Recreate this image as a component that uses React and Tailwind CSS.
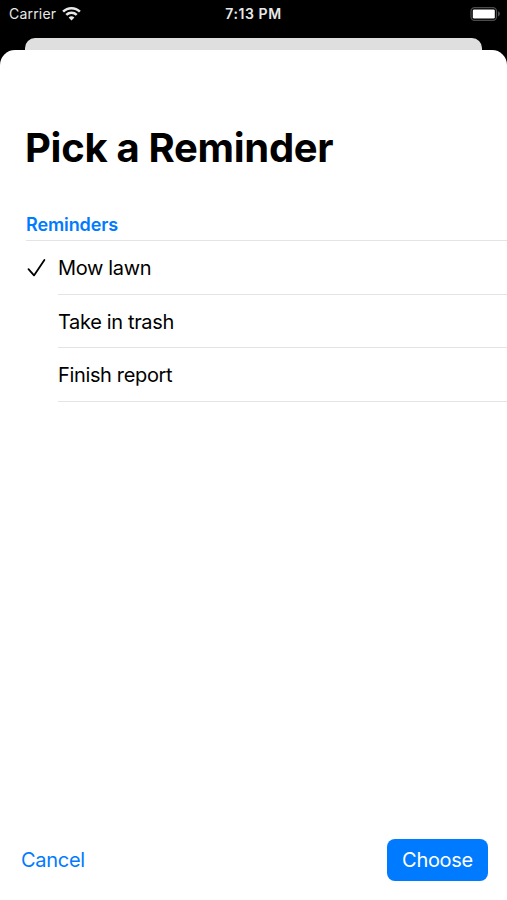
const reminders = [
  { title: 'Mow lawn', selected: true },
  { title: 'Take in trash', selected: false },
  { title: 'Finish report', selected: false }
]

function WifiIcon() {
  return (
    <svg className="h-[15px] w-[19px]" viewBox="0 0 19 15" fill="none" stroke="currentColor" strokeWidth="2.5">
      <path d="M1.1 5.6a11.9 11.9 0 0 1 16.8 0" />
      <path d="M4.3 8.9a7.4 7.4 0 0 1 10.4 0" />
      <path d="M9.5 14.5L6.6 11.6a4.1 4.1 0 0 1 5.8 0z" fill="currentColor" stroke="none" />
    </svg>
  )
}

function BatteryIcon() {
  return (
    <svg className="h-[14px] w-[30px]" viewBox="0 0 30 14" fill="none">
      <rect x="1" y="0.6" width="25.5" height="12.8" rx="3.6" stroke="#4c4c4c" strokeWidth="1.2" />
      <rect x="2.8" y="2.4" width="22" height="9.2" rx="1.4" fill="white" />
      <path d="M28 4.2c2.6 1 2.6 4.2 0 5.2z" fill="#4c4c4c" />
    </svg>
  )
}

function StatusBar() {
  return (
    <div className="grid h-[27px] grid-cols-3 items-center pr-[7px] pl-[9px] text-[#e8e8e8]">
      <div className="flex items-center gap-[6px] text-[14px]">
        <span className="tracking-[0.2px]">Carrier</span>
        <WifiIcon />
      </div>
      <div className="pr-[2px] text-center text-[14px] font-semibold tracking-[0.6px]">7:13 PM</div>
      <div className="flex justify-end">
        <BatteryIcon />
      </div>
    </div>
  )
}

function ReminderRow({ title, selected }) {
  return (
    <li className="flex h-[53.7px] pl-[26px]">
      <div className="flex w-8 items-center">
        {selected && (
          <svg className="h-5 w-5" viewBox="0 0 20 20" fill="none" stroke="black" strokeWidth="1.8" strokeLinecap="round" strokeLinejoin="round">
            <path d="M2.5 11.2L8 17.4 18.4 2" />
          </svg>
        )}
      </div>
      <div className="flex flex-1 items-center border-b border-[#e4e4e6] pt-[1.5px] text-[20px] tracking-[-0.35px]">
        {title}
      </div>
    </li>
  )
}

export default function App() {
  return (
    <div className="flex h-[900px] w-full flex-col overflow-hidden bg-black font-['Inter',sans-serif] text-black">
      <StatusBar />
      <div className="mx-[25px] mt-[11px] h-3 rounded-t-[10px] bg-[#dfdfdf]" />
      <main className="flex flex-1 flex-col rounded-t-[15px] bg-white">
        <h1 className="mt-[74px] ml-[25px] text-[40px] leading-12 font-bold tracking-[-0.3px]">Pick a Reminder</h1>
        <h2 className="mt-[38px] ml-[26px] h-[31px] border-b border-[#e4e4e6] text-[18px] leading-[30px] font-semibold tracking-[-0.1px] text-[#007aff]">
          Reminders
        </h2>
        <ul>
          {reminders.map(r => (
            <ReminderRow key={r.title} title={r.title} selected={r.selected} />
          ))}
        </ul>
        <footer className="mt-auto mb-[19px] flex items-center justify-between pr-[19px] pl-[21px] text-[20px] tracking-[-0.3px]">
          <button className="text-[#007aff]">Cancel</button>
          <button className="h-[42px] w-[101px] rounded-[8px] bg-[#007aff] text-white">Choose</button>
        </footer>
      </main>
    </div>
  )
}
